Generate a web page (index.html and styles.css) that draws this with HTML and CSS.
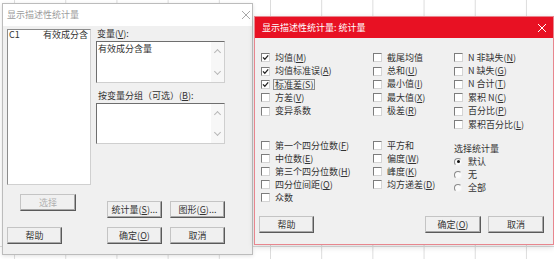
FILE: index.html
```html
<!DOCTYPE html>
<html lang="zh-CN">
<head>
  <meta charset="UTF-8">
  <title>显示描述性统计量</title>
  <link rel="stylesheet" href="styles.css">
</head>
<body>
  <!-- main dialog (inactive, behind) -->
  <section class="dlg dlg-main">
    <header class="title-bar">
      <span>显示描述性统计量</span>
      <svg class="close" width="8" height="8" viewBox="0 0 8 8"><path d="M0 0L8 8M8 0L0 8" stroke="#a8a8a8" stroke-width="1"/></svg>
    </header>
    <div class="main-body">
      <div class="main-row main-top">
        <div class="listbox">
          <div class="list-row"><span class="col-id">C1</span><span class="col-name">有效成分含</span></div>
        </div>
        <div class="fields">
          <label class="field-label">变量(<u>V</u>):</label>
          <div class="textbox tb-vars">
            <span class="tb-text">有效成分含量</span>
            <div class="scroll"><i class="chev up"></i><i class="chev down"></i></div>
          </div>
          <label class="field-label gap">按变量分组（可选）(<u>B</u>):</label>
          <div class="textbox tb-group">
            <span class="tb-text"></span>
            <div class="scroll"><i class="chev up"></i><i class="chev down"></i></div>
          </div>
        </div>
      </div>
      <div class="main-row main-mid">
        <div><button class="btn btn-select" disabled>选择</button></div>
        <div class="btn-pair pair-mid">
          <button class="btn btn-wide">统计量(<u>S</u>)...</button>
          <button class="btn btn-wide">图形(<u>G</u>)...</button>
        </div>
      </div>
      <div class="main-row main-bottom">
        <div><button class="btn btn-help">帮助</button></div>
        <div class="btn-pair">
          <button class="btn btn-wide">确定(<u>O</u>)</button>
          <button class="btn btn-wide">取消</button>
        </div>
      </div>
    </div>
  </section>

  <!-- statistics sub dialog (active) -->
  <section class="dlg dlg-stats">
    <header class="title-bar red">
      <span>显示描述性统计量: 统计量</span>
      <svg class="close" width="8" height="8" viewBox="0 0 8 8"><path d="M0 0L8 8M8 0L0 8" stroke="#fff" stroke-width="1"/></svg>
    </header>
    <div class="stats-body">
      <div class="stat-cols upper">
        <div class="stat-col">
          <div class="chk"><span class="box on"></span>均值(<u>M</u>)</div>
          <div class="chk"><span class="box on"></span>均值标准误(<u>A</u>)</div>
          <div class="chk"><span class="box on"></span><span class="focus">标准差(<u>S</u>)</span></div>
          <div class="chk"><span class="box"></span>方差(<u>V</u>)</div>
          <div class="chk"><span class="box"></span>变异系数</div>
        </div>
        <div class="stat-col">
          <div class="chk"><span class="box"></span>截尾均值</div>
          <div class="chk"><span class="box"></span>总和(<u>U</u>)</div>
          <div class="chk"><span class="box"></span>最小值(<u>I</u>)</div>
          <div class="chk"><span class="box"></span>最大值(<u>X</u>)</div>
          <div class="chk"><span class="box"></span>极差(<u>R</u>)</div>
        </div>
        <div class="stat-col">
          <div class="chk"><span class="box"></span>N 非缺失(<u>N</u>)</div>
          <div class="chk"><span class="box"></span>N 缺失(<u>G</u>)</div>
          <div class="chk"><span class="box"></span>N 合计(<u>T</u>)</div>
          <div class="chk"><span class="box"></span>累积 N(<u>C</u>)</div>
          <div class="chk"><span class="box"></span>百分比(<u>P</u>)</div>
          <div class="chk"><span class="box"></span>累积百分比(<u>L</u>)</div>
        </div>
      </div>

      <div class="stat-cols lower">
        <div class="stat-col">
          <div class="chk"><span class="box"></span>第一个四分位数(<u>F</u>)</div>
          <div class="chk"><span class="box"></span>中位数(<u>E</u>)</div>
          <div class="chk"><span class="box"></span>第三个四分位数(<u>H</u>)</div>
          <div class="chk"><span class="box"></span>四分位间距(<u>Q</u>)</div>
          <div class="chk"><span class="box"></span>众数</div>
        </div>
        <div class="stat-col">
          <div class="chk"><span class="box"></span>平方和</div>
          <div class="chk"><span class="box"></span>偏度(<u>W</u>)</div>
          <div class="chk"><span class="box"></span>峰度(<u>K</u>)</div>
          <div class="chk"><span class="box"></span>均方递差(<u>D</u>)</div>
        </div>
        <div class="stat-col radio-group">
          <div class="group-title">选择统计量</div>
          <div class="chk"><span class="radio on"></span>默认</div>
          <div class="chk"><span class="radio"></span>无</div>
          <div class="chk"><span class="radio"></span>全部</div>
        </div>
      </div>

      <div class="stats-actions">
        <button class="btn btn-help">帮助</button>
        <div class="btn-pair">
          <button class="btn btn-ok">确定(<u>O</u>)</button>
          <button class="btn btn-ok">取消</button>
        </div>
      </div>
    </div>
  </section>
</body>
</html>
```

FILE: styles.css
```css
/* Spreadsheet behind the dialogs */
body {
  margin: 0;
  width: 554px;
  height: 259px;
  overflow: hidden;
  position: relative;
  font-family: "Noto Sans CJK SC", "DejaVu Sans", sans-serif;
  font-size: 9px;
  line-height: 10px;
  color: #333;
  background-color: #fff;
  background-image:
    linear-gradient(to bottom, transparent 246px, #dcdcdc 246px, #dcdcdc 247px, transparent 247px),
    linear-gradient(to right, #dcdcdc 1px, transparent 1px);
  background-size: 100% 100%, 51.2px 100%;
  background-position: 0 0, 270px 0;
}

u {
  text-decoration-thickness: 1px;
  text-underline-offset: 1px;
}

/* Windows */
.dlg {
  position: absolute;
  box-sizing: border-box;
  background: #f0f0f0;
}

.dlg-main {
  left: 2px;
  top: 3px;
  width: 251px;
  height: 252px;
  border: 1px solid #bcbcbc;
  box-shadow: 0 1px 4px rgba(0, 0, 0, 0.12);
}

.dlg-stats {
  left: 254px;
  top: 16px;
  width: 300px;
  height: 229px;
  border: 1px solid #e8868e;
  box-shadow: 0 2px 6px rgba(0, 0, 0, 0.15);
}

.title-bar {
  height: 22px;
  display: flex;
  align-items: center;
  justify-content: space-between;
  padding: 0 2px 0 4px;
  background: #fff;
  color: #9c9c9c;
}

.title-bar.red {
  height: 21px;
  padding: 0 7px 0 7px;
  background: #e81123;
  color: #fff;
}

.close {
  display: block;
}

/* Main dialog body */
.main-body {
  padding: 3px 0 0 4px;
}

.main-row {
  display: grid;
  grid-template-columns: 84px 129px;
  column-gap: 5px;
}

.main-top {
  height: 156px;
}

.listbox {
  box-sizing: border-box;
  height: 156px;
  background: #fff;
  border: 1px solid;
  border-color: #8c8c8c #d0d0d0 #d0d0d0 #8c8c8c;
  padding: 0 1px 0 1px;
  overflow: hidden;
}

.list-row {
  display: flex;
  line-height: 10px;
  white-space: nowrap;
}

.col-id {
  width: 34px;
  flex: none;
}

.fields {
  display: flex;
  flex-direction: column;
}

.field-label {
  line-height: 10px;
  padding-left: 1px;
}

.field-label.gap {
  margin-top: 8px;
  padding-left: 2px;
}

.textbox {
  box-sizing: border-box;
  margin-top: 2px;
  display: flex;
  background: #fff;
  border: 1px solid;
  border-color: #6e6e6e #cfcfcf #cfcfcf #6e6e6e;
}

.tb-vars {
  height: 42px;
}

.tb-group {
  height: 41px;
}

.tb-text {
  flex: 1;
  padding: 2px 0 0 1px;
}

.scroll {
  width: 13px;
  background: #f7f7f7;
  display: flex;
  flex-direction: column;
  justify-content: space-between;
  align-items: center;
  padding: 6px 0 6px;
}

.chev {
  width: 4px;
  height: 4px;
  border-left: 1px solid #b8b8b8;
  border-top: 1px solid #b8b8b8;
}

.chev.up {
  transform: rotate(45deg);
  margin-top: 2px;
}

.chev.down {
  transform: rotate(-135deg);
  margin-bottom: 2px;
}

/* Buttons */
.btn {
  box-sizing: border-box;
  height: 17px;
  padding: 0;
  font: inherit;
  color: #333;
  background: #f0f0f0;
  border: 1px solid;
  border-color: #c4c4c4 #5a5a5a #5a5a5a #c4c4c4;
  box-shadow: inset -1px -1px 0 #a8a8a8;
}

.btn:disabled {
  color: #b0b0b0;
}

.btn-select {
  width: 56px;
  margin: 9px 0 0 13px;
}

.btn-wide {
  width: 66px;
}

.btn-help {
  width: 55px;
}

.btn-ok {
  width: 56px;
}

.btn-pair {
  display: flex;
  gap: 8px;
  margin-left: 11px;
}

.main-mid {
  height: 33px;
}

.pair-mid {
  margin-top: 16px;
}

.main-bottom {
  margin-top: 9px;
}

/* Statistics dialog body */
.stats-body {
  padding: 13px 9px 0 6px;
}

.stat-cols {
  display: grid;
  grid-template-columns: 112px 81px 1fr;
}

.stat-col {
  display: flex;
  flex-direction: column;
}

.upper .chk {
  height: 13.4px;
}

.lower {
  margin-top: 8px;
}

.lower .chk,
.group-title {
  height: 13px;
  line-height: 13px;
}

.radio-group {
  padding-top: 3px;
}

.chk {
  display: flex;
  align-items: center;
  white-space: nowrap;
}

.box {
  box-sizing: border-box;
  width: 9px;
  height: 9px;
  margin-right: 5px;
  flex: none;
  background: #fff;
  border: 1px solid;
  border-color: #7c7c7c #d4d4d4 #d4d4d4 #7c7c7c;
}

.box.on {
  background: #fff url("data:image/svg+xml,%3Csvg xmlns='http://www.w3.org/2000/svg' viewBox='0 0 7 7'%3E%3Cpath d='M1 3.4L2.8 5.3L6.2 1.3' fill='none' stroke='%23222' stroke-width='1.3'/%3E%3C/svg%3E") center / 7px 7px no-repeat;
}

.focus {
  outline: 1px solid #8e8e8e;
  line-height: 9px;
  padding: 0 1px;
  margin-left: -1px;
}

.radio {
  box-sizing: border-box;
  width: 8px;
  height: 8px;
  margin: 0 6px 0 0;
  flex: none;
  border-radius: 50%;
  background: #fbfbfb;
  border: 1px solid;
  border-color: #8a8a8a #f4f4f4 #f4f4f4 #8a8a8a;
  position: relative;
}

.radio.on::after {
  content: "";
  position: absolute;
  left: 1.5px;
  top: 1.5px;
  width: 3px;
  height: 3px;
  border-radius: 50%;
  background: #111;
}

.stats-actions {
  display: flex;
  justify-content: space-between;
  margin: 12px 0 0 -2px;
}

.stats-actions .btn-pair {
  gap: 7px;
}
```
